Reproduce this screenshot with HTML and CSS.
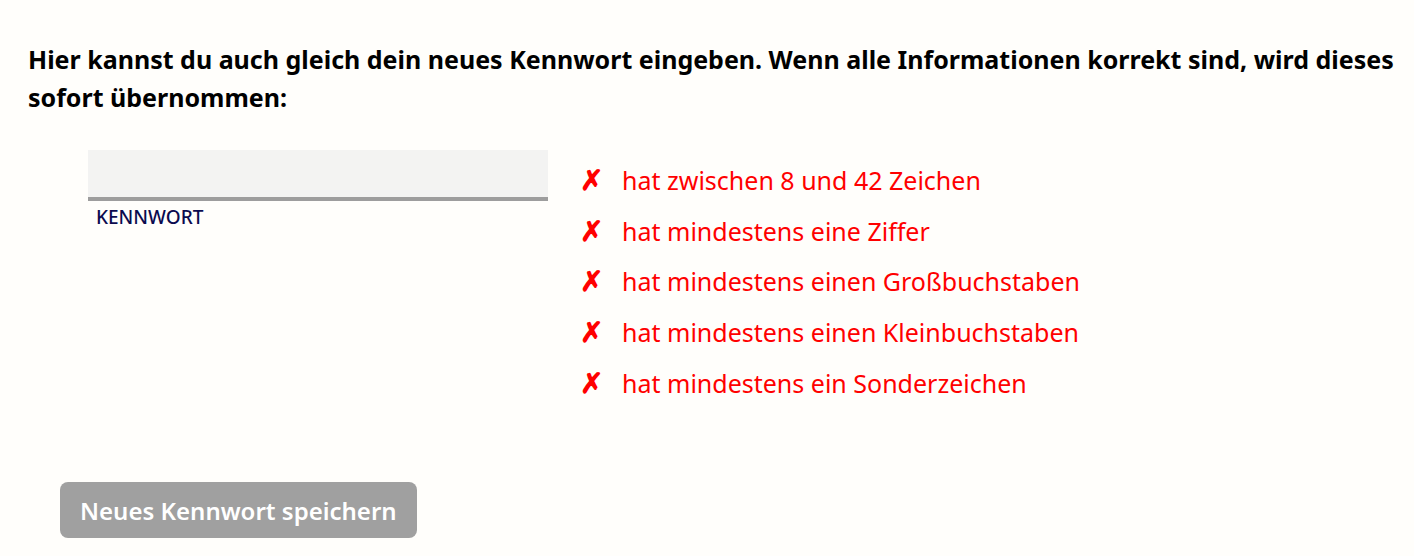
FILE: index.html
```html
<!DOCTYPE html>
<html lang="de">
<head>
  <meta charset="UTF-8" />
  <title>Neues Kennwort</title>
  <link rel="stylesheet" href="styles.css">
</head>
<body>
  <main>
    <p class="intro">Hier kannst du auch gleich dein neues Kennwort eingeben. Wenn alle Informationen korrekt sind, wird dieses sofort übernommen:</p>

    <div class="pw-row">
      <div class="field">
        <input type="password" id="pw" />
        <label for="pw">KENNWORT</label>
      </div>
      <ul class="rules">
        <li><span class="mark">✗</span>hat zwischen 8 und 42 Zeichen</li>
        <li><span class="mark">✗</span>hat mindestens eine Ziffer</li>
        <li><span class="mark">✗</span>hat mindestens einen Großbuchstaben</li>
        <li><span class="mark">✗</span>hat mindestens einen Kleinbuchstaben</li>
        <li><span class="mark">✗</span>hat mindestens ein Sonderzeichen</li>
      </ul>
    </div>

    <button class="save" disabled>Neues Kennwort speichern</button>
  </main>
</body>
</html>
```

FILE: styles.css
```css
* {
  box-sizing: border-box;
}

body {
  font-family: "Noto Sans", sans-serif;
  background: #fffefb;
  color: #000;
  margin: 0;
  padding: 0;
}

main {
  padding: 40px 12px 0 28px;
}

.intro {
  margin: 0;
  font-size: 25px;
  font-weight: bold;
  line-height: 38px;
}

.pw-row {
  display: flex;
  gap: 32px;
  margin-top: 34px;
  padding-left: 60px;
}

.field {
  width: 460px;
}

.field input {
  display: block;
  width: 100%;
  height: 51px;
  border: none;
  border-bottom: 4px solid #9d9d9d;
  background: #f3f3f2;
  font-size: 20px;
  padding: 0 8px;
  outline: none;
}

.field label {
  display: block;
  margin-top: 3px;
  padding-left: 8px;
  font-size: 19px;
  font-weight: 500;
  color: #0b0b4f;
}

.rules {
  list-style: none;
  margin: 9px 0 0;
  padding: 0;
  color: #ff0000;
  font-size: 25px;
  font-weight: 450;
}

.rules li {
  height: 50.7px;
  line-height: 40px;
}

.mark {
  display: inline-block;
  width: 42px;
  font-size: 28px;
  font-weight: bold;
}

.save {
  margin-top: 70px;
  margin-left: 32px;
  height: 56px;
  padding: 0 20px;
  border: none;
  border-radius: 8px;
  background: #a0a0a0;
  color: #fff;
  font-family: "Noto Sans", sans-serif;
  font-size: 24px;
  font-weight: 600;
}
```
